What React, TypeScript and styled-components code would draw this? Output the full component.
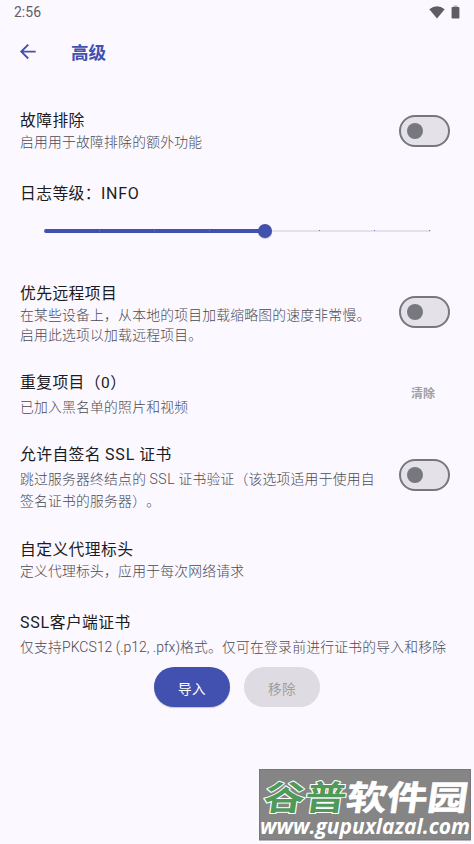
import React from "react";
import styled, { createGlobalStyle } from "styled-components";

const GlobalStyle = createGlobalStyle`
  * { box-sizing: border-box; }
  body { margin: 0; background: #fbf8ff; }
`;

const Screen = styled.div`
  position: relative;
  width: 474px;
  height: 844px;
  overflow: hidden;
  background: #fbf8ff;
  font-family: "Noto Sans CJK SC", sans-serif;
  text-spacing-trim: space-all;
  color: #1b1b21;
`;

const StatusBar = styled.div`
  height: 24px;
  padding: 0 14px;
  display: flex;
  align-items: center;
  justify-content: space-between;
  font: 400 14px/24px Roboto, sans-serif;
  color: #5d5d62;
`;

const StatusIcons = styled.div`
  display: flex;
  align-items: center;
  gap: 6px;
  height: 22px;
  svg { display: block; }
`;

const AppBar = styled.header`
  height: 56px;
  padding-left: 19px;
  display: flex;
  align-items: center;
  gap: 34px;
`;

const BarTitle = styled.h1`
  margin: 0;
  font-size: 17.6px;
  line-height: 24px;
  font-weight: 700;
  color: #4250af;
`;

const Content = styled.main`
  padding: 30px 24px 0 20px;
`;

const Row = styled.section<{ $height: number }>`
  height: ${(p) => p.$height}px;
  display: flex;
  align-items: flex-start;
  justify-content: space-between;
`;

const Texts = styled.div<{ $gap?: number }>`
  display: flex;
  flex-direction: column;
  gap: ${(p) => p.$gap ?? 1}px;
  white-space: nowrap;
`;

const Title = styled.div`
  font-size: 15.8px;
  line-height: 20px;
  letter-spacing: 0.4px;
`;

const Description = styled.div<{ $leading?: number }>`
  font-size: 13.8px;
  line-height: ${(p) => p.$leading ?? 20}px;
  letter-spacing: 0.22px;
  font-weight: 300;
  color: #4a4a50;
`;

const Latin = styled.span<{ $spacing?: number; $size?: number; $light?: boolean }>`
  font-family: Roboto, sans-serif;
  font-weight: ${(p) => (p.$light ? 300 : 400)};
  letter-spacing: ${(p) => p.$spacing ?? 0.6}px;
  font-size: ${(p) => p.$size ?? 15.5}px;
  line-height: 1;
`;

const Switch = styled.button<{ $top: number }>`
  margin: ${(p) => p.$top}px 0 0;
  width: 51px;
  height: 32px;
  padding: 0 0 0 6px;
  display: flex;
  align-items: center;
  flex: none;
  border: 2px solid #777780;
  border-radius: 16px;
  background: #e4e1e9;
  &::before {
    content: "";
    width: 16px;
    height: 16px;
    border-radius: 50%;
    background: #777780;
  }
`;

const Slider = styled.div`
  position: relative;
  width: 387px;
  height: 14px;
  margin: 20.5px 0 0 23.5px;
  display: flex;
  align-items: center;
`;

const Filled = styled.div`
  width: 222px;
  height: 4px;
  border-radius: 2px 0 0 2px;
  background: #4250af;
`;

const Track = styled.div`
  flex: 1;
  height: 2px;
  background: #e4e1e9;
`;

const Ticks = styled.div`
  position: absolute;
  left: 0.5px;
  right: 0.5px;
  top: 6.5px;
  display: flex;
  justify-content: space-between;
`;

const Tick = styled.i<{ $active: boolean }>`
  width: 1px;
  height: 1px;
  background: ${(p) => (p.$active ? "#7a85cc" : "#6d78c2")};
`;

const Thumb = styled.div`
  position: absolute;
  left: 214px;
  top: 0;
  width: 14px;
  height: 14px;
  border-radius: 50%;
  background: #4250af;
  box-shadow: 0 1px 1px rgba(0, 0, 0, 0.2);
`;

const Clear = styled.button`
  margin: 11px 15px 0 0;
  padding: 0;
  border: 0;
  background: none;
  font: 700 12px/20px "Noto Sans CJK SC", sans-serif;
  color: #a09fa5;
`;

const Actions = styled.div`
  display: flex;
  gap: 14px;
  padding-left: 134px;
`;

const Pill = styled.button<{ $disabled?: boolean }>`
  width: 76px;
  height: 40px;
  padding: 1px 0 0;
  border: 0;
  border-radius: 20px;
  font: 400 13.6px/20px "Noto Sans CJK SC", sans-serif;
  letter-spacing: 0.3px;
  color: ${(p) => (p.$disabled ? "#9e9da3" : "#fff")};
  background: ${(p) => (p.$disabled ? "#dedbe2" : "#4250af")};
  box-shadow: ${(p) => (p.$disabled ? "none" : "0 1px 1px rgba(0,0,0,.2)")};
`;

const Watermark = styled.svg`
  position: absolute;
  left: 259px;
  top: 769px;
  overflow: visible;
`;

export default function App() {
  return (
    <Screen>
      <GlobalStyle />
      <StatusBar>
        <span>2:56</span>
        <StatusIcons>
          <svg width="16" height="13" viewBox="0 0 16 13">
            <path d="M0.3 3.3Q8 -2.7 15.7 3.3L8 12.6Z" fill="#5d5d62" />
          </svg>
          <svg width="9" height="14" viewBox="0 0 9 14">
            <path d="M2.6 0.4h3.8v2H2.6z" fill="#b5b3b9" />
            <path d="M1.3 2h6.4q.7 0 .7.7v10q0 .8-.7.8H1.3q-.7 0-.7-.8v-10q0-.7.7-.7z" fill="#5d5d62" />
          </svg>
        </StatusIcons>
      </StatusBar>
      <AppBar>
        <svg width="18" height="18" viewBox="0 0 18 18" fill="none" stroke="#4250af" strokeWidth="1.9">
          <path d="M16.7 8.6H2.5M9.2 1.7L2.3 8.6l6.9 6.9" />
        </svg>
        <BarTitle>高级</BarTitle>
      </AppBar>
      <Content>
        <Row $height={73}>
          <Texts>
            <Title>故障排除</Title>
            <Description>启用用于故障排除的额外功能</Description>
          </Texts>
          <Switch $top={4.5} />
        </Row>
        <Title>
          日志等级：<Latin $size={16} $spacing={0.7}>INFO</Latin>
        </Title>
        <Row $height={80}>
          <Slider>
            <Filled />
            <Track />
            <Ticks>
              {[0, 1, 2, 3, 4, 5, 6, 7].map((n) => (
                <Tick key={n} $active={n < 4} />
              ))}
            </Ticks>
            <Thumb />
          </Slider>
        </Row>
        <Row $height={89}>
          <Texts>
            <Title>优先远程项目</Title>
            <Description>
              在某些设备上，从本地的项目加载缩略图的速度非常慢。
              <br />
              启用此选项以加载远程项目。
            </Description>
          </Texts>
          <Switch $top={13} />
        </Row>
        <Row $height={72}>
          <Texts $gap={4}>
            <Title>
              重复项目（<Latin>0</Latin>）
            </Title>
            <Description>已加入黑名单的照片和视频</Description>
          </Texts>
          <Clear>清除</Clear>
        </Row>
        <Row $height={95}>
          <Texts $gap={3}>
            <Title>
              允许自签名 <Latin $size={16} $spacing={0.9}>SSL</Latin> 证书
            </Title>
            <Description $leading={22}>
              跳过服务器终结点的 <Latin $light $size={14} $spacing={0.6}>SSL</Latin> 证书验证（该选项适用于使用自
              <br />
              签名证书的服务器）。
            </Description>
          </Texts>
          <Switch $top={15} />
        </Row>
        <Row $height={73}>
          <Texts>
            <Title>自定义代理标头</Title>
            <Description>定义代理标头，应用于每次网络请求</Description>
          </Texts>
        </Row>
        <Row $height={55}>
          <Texts $gap={4}>
            <Title>
              <Latin $size={16} $spacing={0.7}>SSL</Latin>客户端证书
            </Title>
            <Description>
              仅支持<Latin $light $size={14} $spacing={0}>PKCS12 (.p12, .pfx)</Latin>格式。仅可在登录前进行证书的导入和移除
            </Description>
          </Texts>
        </Row>
        <Actions>
          <Pill>导入</Pill>
          <Pill $disabled>移除</Pill>
        </Actions>
      </Content>
      <Watermark width="213" height="72" viewBox="0 0 213 72">
        <rect x="0.5" y="0.5" width="211" height="70.5" fill="#858585" stroke="#777" />
        <g fontFamily="Noto Sans CJK SC, sans-serif" fontWeight="700" fontSize="34" paintOrder="stroke" strokeLinejoin="round">
          <text transform="translate(3 41) skewX(-8) scale(1.22 1)" fill="#4f9a5b" stroke="#fff" strokeWidth="2">谷普</text>
          <text transform="translate(86 41) skewX(-8) scale(1.19 1)" fill="#fff" stroke="#fff" strokeWidth="0.6">软件园</text>
        </g>
        <text x="1" y="65" textLength="210" lengthAdjust="spacingAndGlyphs" fill="#fff" fontFamily="Open Sans, sans-serif" fontWeight="700" fontStyle="italic" fontSize="21">www.gupuxlazal.com</text>
      </Watermark>
    </Screen>
  );
}
